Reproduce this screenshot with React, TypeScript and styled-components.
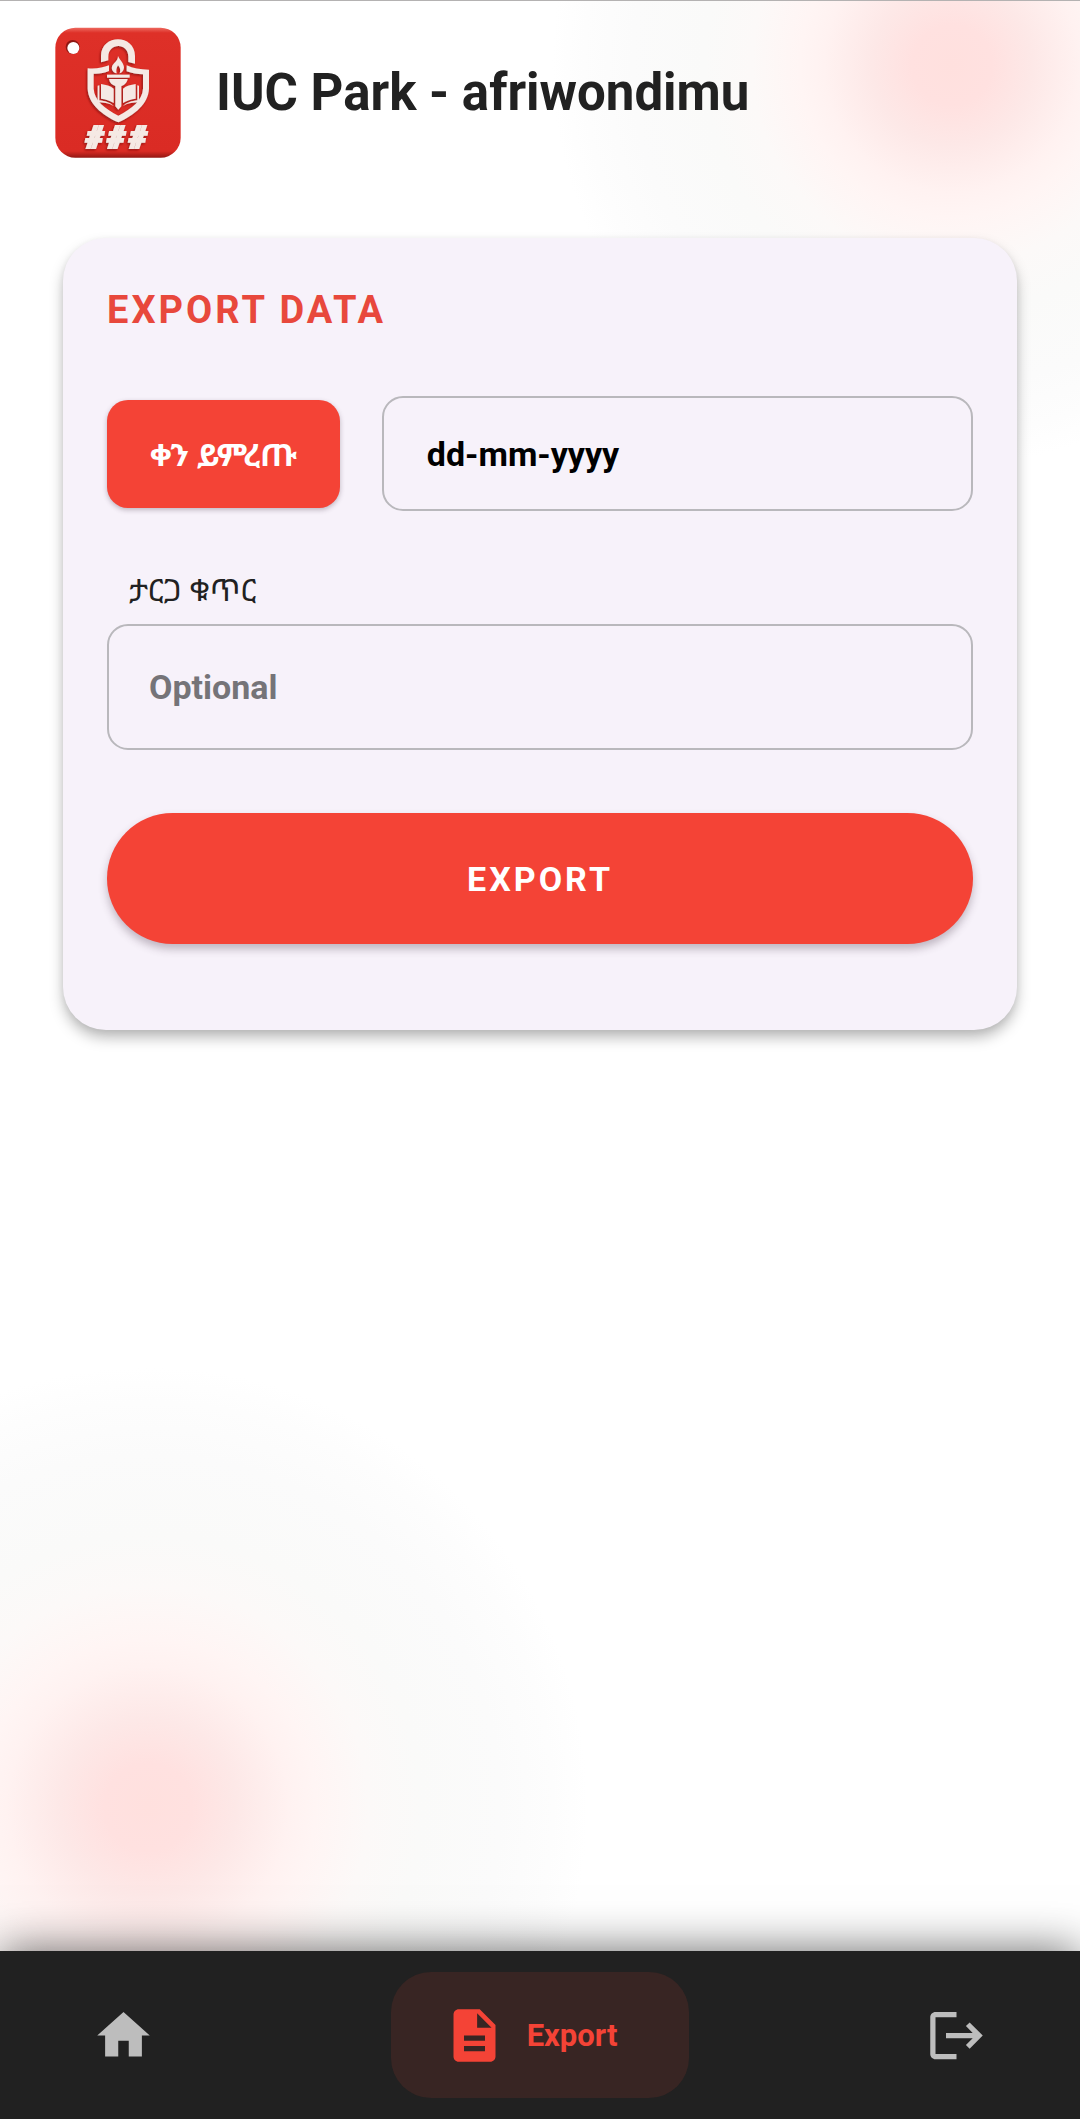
import React, { useState } from 'react';
import styled, { createGlobalStyle } from 'styled-components';
import { MdDescription, MdHome, MdLogout } from 'react-icons/md';

const GlobalStyle = createGlobalStyle`
  *, *::before, *::after { box-sizing: border-box; }
  body {
    margin: 0;
    background: #fff;
    color: #212121;
    font-family: Roboto, "Noto Sans Ethiopic", "Noto Sans", sans-serif;
  }
  button, input { font-family: inherit; }
`;

const blob = (at: string, size: number) => `radial-gradient(circle ${size}px at ${at},
  #ffe0de 0%, #ffe1e0 10%, #fde8e7 20%, #fff2f1 32%, #fff5f4 38%, #fcf9f8 50%,
  #fafaf9 62%, #fbfbfb 80%, #fdfdfd 92%, rgba(255, 255, 255, 0) 100%)`;

const Page = styled.div`
  display: flex;
  flex-direction: column;
  min-height: 100vh;
  border-top: 1px solid #b4b2b2;
  background:
    ${blob('calc(100% - 128px) 64px', 400)},
    ${blob('148px calc(100% - 312px)', 440)},
    #fff;
`;

const Header = styled.header`
  display: flex;
  align-items: center;
  gap: 35px;
  padding: 26px 55px;
`;

const AppName = styled.h1`
  margin: 0;
  font-size: 51px;
  line-height: 60px;
  font-weight: 700;
`;

const Main = styled.main`
  flex: 1;
  padding: 54px 63px 64px;
`;

const Card = styled.form`
  display: flex;
  flex-direction: column;
  padding: 50px 44px 86px;
  border-radius: 43px;
  background: #f7f2fa;
  box-shadow: 0 8px 14px rgba(0, 0, 0, 0.26), 0 2px 6px rgba(0, 0, 0, 0.06);
`;

const CardTitle = styled.h2`
  margin: 0 0 64px;
  color: #e8483c;
  font-size: 38px;
  line-height: 44px;
  font-weight: 700;
  letter-spacing: 3px;
`;

const DateRow = styled.div`
  display: flex;
  align-items: center;
  gap: 42px;
  margin-bottom: 60px;
`;

const Button = styled.button<{ $wide?: boolean }>`
  flex: none;
  height: ${(p) => (p.$wide ? 131 : 108)}px;
  padding: 0 43px;
  border: 0;
  border-radius: ${(p) => (p.$wide ? 66 : 21)}px;
  background: #f44336;
  color: #fff;
  font-size: ${(p) => (p.$wide ? 34 : 31)}px;
  font-weight: 700;
  letter-spacing: ${(p) => (p.$wide ? '3px' : 'normal')};
  box-shadow: 0 ${(p) => (p.$wide ? '5px 8px' : '2px 5px')} rgba(60, 40, 60, 0.3);
  cursor: pointer;
`;

const Field = styled.input<{ $tall?: boolean; $hint: string }>`
  flex: ${(p) => (p.$tall ? 'none' : '1')};
  min-width: 0;
  height: ${(p) => (p.$tall ? 126 : 115)}px;
  padding: 0 ${(p) => (p.$tall ? 40 : 43)}px;
  border: 2px solid #b9b8bc;
  border-radius: 21px;
  background: transparent;
  color: #000;
  font-size: 34px;
  font-weight: 700;
  &::placeholder { color: ${(p) => p.$hint}; opacity: 1; }
`;

const Label = styled.label`
  margin: 0 22px 13px;
  font-size: 31px;
  line-height: 40px;
`;

const Spacer = styled.div`
  height: 63px;
`;

const NavBar = styled.nav`
  display: flex;
  align-items: center;
  justify-content: space-between;
  padding: 21px 40px;
  background: #212121;
  box-shadow: 0 0 44px rgba(0, 0, 0, 0.6);
`;

const NavItem = styled.a<{ $active?: boolean }>`
  display: flex;
  align-items: center;
  gap: 21px;
  height: 126px;
  padding: 0 ${(p) => (p.$active ? 72 : 52)}px 0 52px;
  border-radius: 40px;
  background: ${(p) => (p.$active ? '#382523' : 'transparent')};
  color: ${(p) => (p.$active ? '#f44336' : '#bdbdbd')};
  font-size: 31px;
  font-weight: 700;
  text-decoration: none;
  svg { display: block; }
`;

function Logo() {
  return (
    <svg width="126" height="131" viewBox="45 50 378 393" role="img" aria-label="IUC Park">
      <defs>
        <linearGradient id="tag" x1="0" y1="0" x2="0" y2="1">
          <stop offset="0" stopColor="#ee6a60" />
          <stop offset="0.04" stopColor="#de3028" />
          <stop offset="0.95" stopColor="#da2b24" />
          <stop offset="1" stopColor="#941713" />
        </linearGradient>
        <filter id="relief" x="-20%" y="-20%" width="140%" height="140%">
          <feDropShadow dx="-3" dy="4" stdDeviation="3" floodColor="#7c0f0b" floodOpacity="0.75" />
        </filter>
      </defs>
      <rect x="46" y="52" width="376" height="390" rx="60" fill="url(#tag)" />
      <circle cx="98" cy="110" r="21" fill="#8e1713" />
      <circle cx="100" cy="113" r="18" fill="#fff" />
      <g filter="url(#relief)" fill="#f5e9e4">
        <path d="M183 156V137C183 70 285 70 285 137V160L265 155V139C265 96 205 96 205 139V150Z" />
        <path
          d="M207 165C189 172 170 176 143 174V235C145 280 185 313 235 336C285 313 325 280 327 235V178C300 178 279 174 260 165V183C276 189 292 192 309 192V235C307 270 277 294 235 316C193 294 163 270 161 235V190C178 191 192 188 207 182Z"
          fillRule="evenodd"
        />
        <path d="M234 137C241 151 251 158 252 171C252 180 247 187 239 189C243 179 240 171 234 165C229 173 228 181 230 189C219 186 214 178 216 169C219 158 234 153 234 137Z" />
        <path d="M201 193H269V202H201Z" />
        <path d="M207 206H263C261 219 251 225 244 227V288L235 298L226 288V227C217 224 209 218 207 206Z" />
        <path d="M183 221C198 224 211 226 221 235V278C210 270 197 267 183 265Z" />
        <path d="M287 221C272 224 259 226 249 235V278C260 270 273 267 287 265Z" />
        <path d="M173 226L178 225V270C194 272 210 276 221 287C206 278 190 276 173 276Z" />
        <path d="M297 226L292 225V270C276 272 260 276 249 287C264 278 280 276 297 276Z" />
        <text
          x="137 202 267"
          y="413"
          fontFamily="Roboto, sans-serif"
          fontSize="94"
          fontWeight="900"
          fontStyle="italic"
          stroke="#f5e9e4"
          strokeWidth="6"
        >
          ###
        </text>
      </g>
    </svg>
  );
}

export default function App() {
  const [date, setDate] = useState('');
  const [plate, setPlate] = useState('');

  return (
    <Page>
      <GlobalStyle />
      <Header>
        <Logo />
        <AppName>IUC Park - afriwondimu</AppName>
      </Header>
      <Main>
        <Card onSubmit={(e) => e.preventDefault()}>
          <CardTitle>EXPORT DATA</CardTitle>
          <DateRow>
            <Button type="button">ቀን ይምረጡ</Button>
            <Field
              $hint="#000"
              aria-label="ቀን ይምረጡ"
              placeholder="dd-mm-yyyy"
              value={date}
              onChange={(e) => setDate(e.target.value)}
            />
          </DateRow>
          <Label htmlFor="plate">ታርጋ ቁጥር</Label>
          <Field
            id="plate"
            $tall
            $hint="#757478"
            placeholder="Optional"
            value={plate}
            onChange={(e) => setPlate(e.target.value)}
          />
          <Spacer />
          <Button $wide type="submit">EXPORT</Button>
        </Card>
      </Main>
      <NavBar>
        <NavItem href="#home" aria-label="Home">
          <MdHome size={63} />
        </NavItem>
        <NavItem href="#export" $active aria-current="page">
          <MdDescription size={63} />
          Export
        </NavItem>
        <NavItem href="#logout" aria-label="Log out">
          <MdLogout size={63} />
        </NavItem>
      </NavBar>
    </Page>
  );
}
